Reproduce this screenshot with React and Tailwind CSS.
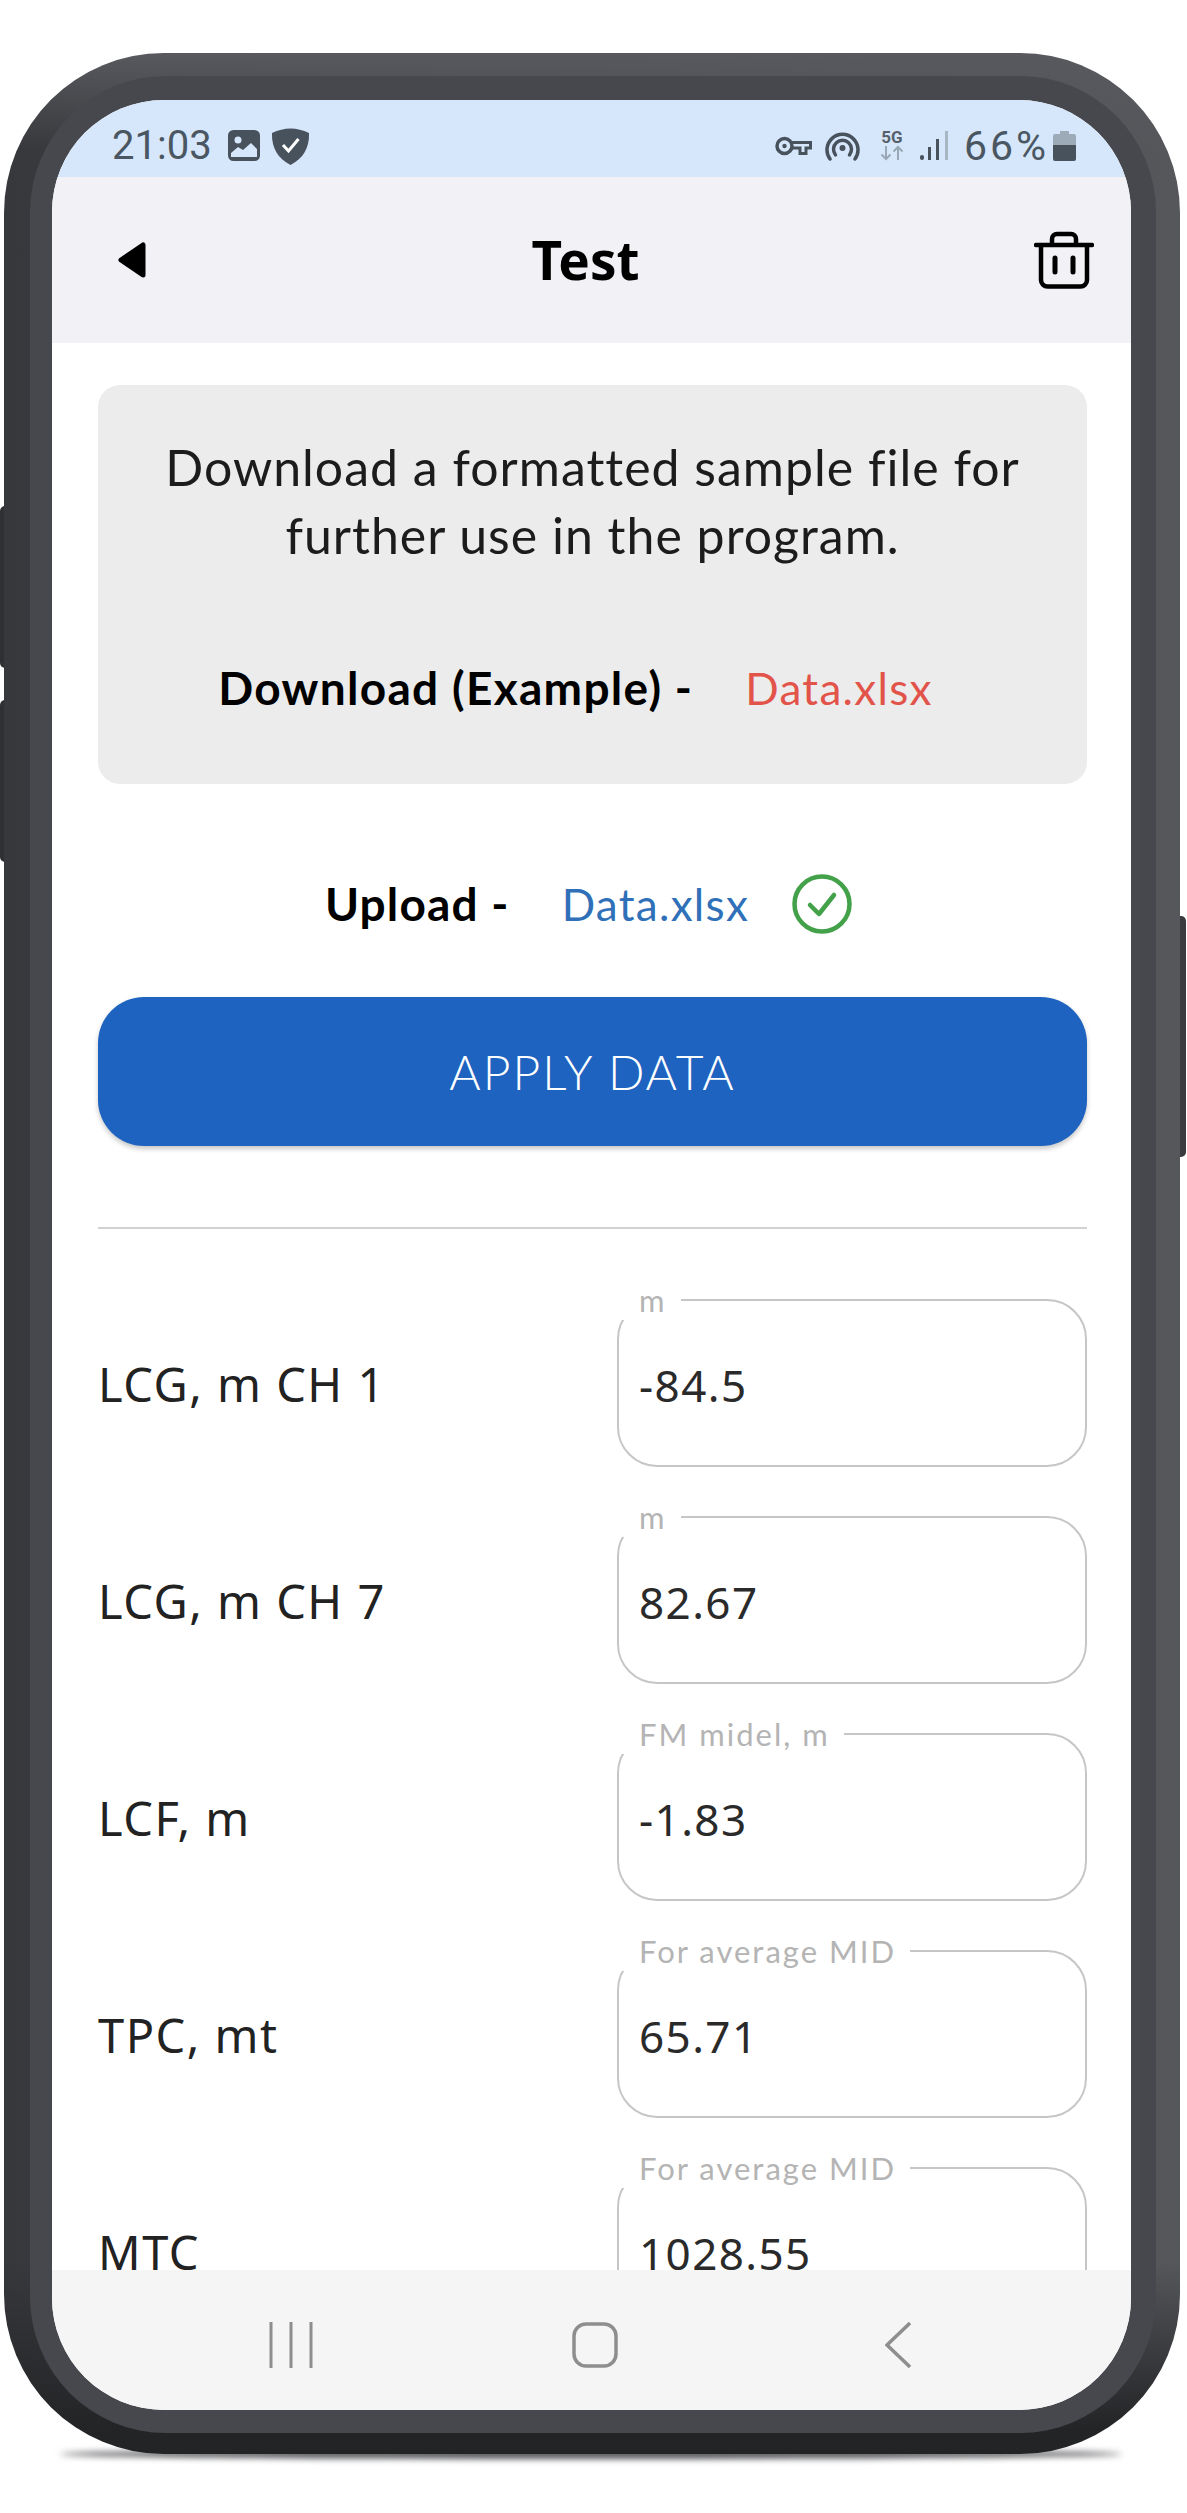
const rows = [
  { label: "LCG, m CH 1", hint: "m", value: "-84.5" },
  { label: "LCG, m CH 7", hint: "m", value: "82.67" },
  { label: "LCF, m", hint: "FM midel, m", value: "-1.83" },
  { label: "TPC, mt", hint: "For average MID", value: "65.71" },
  { label: "MTC", hint: "For average MID", value: "1028.55" },
];

function Field({ label, hint, value }) {
  return (
    <div className="flex items-center justify-between shrink-0 h-[187px]">
      <div className="text-[47px] leading-[56px] tracking-[1.5px] text-[#222222] font-['Noto_Sans',sans-serif] pt-[21px]">{label}</div>
      <fieldset className="w-[470px] h-[187px] shrink-0 border-2 border-[#c6c6c6] rounded-[40px] px-[20px] m-0">
        <legend className="h-[40px] pl-[20px] pr-[14px] ml-[-20px] text-[31px] leading-[40px] tracking-[2px] text-[#b4b4b4] font-['Lato',sans-serif]">{hint}</legend>
        <div className="pt-[38px] text-[44px] leading-[54px] tracking-[1.4px] text-[#2a2a2a] font-['Noto_Sans',sans-serif]">{value}</div>
      </fieldset>
    </div>
  );
}

function StatusBar() {
  const ink = "#47525d";
  return (
    <div className="h-[77px] shrink-0 bg-[#d6e6fb] flex items-center justify-between pl-[60px] pr-[55px] pt-[14px]">
      <div className="flex items-center">
        <span className="text-[40px] leading-[48px] text-[#4a5661] font-['Roboto',sans-serif] mr-[16px]">21:03</span>
        <svg width="32" height="31" viewBox="0 0 32 31" className="mr-[11px]">
          <rect x="1.5" y="1.5" width="29" height="28" rx="4" fill={ink} stroke={ink} strokeWidth="3" />
          <circle cx="10" cy="10" r="3.5" fill="#d6e6fb" />
          <path d="M3 25 L3 23 L10 17 L15 20 L23 13 L29 19 L29 27 L3 27 Z" fill="#d6e6fb" />
        </svg>
        <svg width="39" height="38" viewBox="0 0 39 38">
          <path d="M1 6 Q19.5 -3 38 6 C38.5 20 33 31 19.5 38 C6 31 0.5 20 1 6 Z" fill={ink} />
          <path d="M12 18 L17.5 24 L27.5 12" fill="none" stroke="#ffffff" strokeWidth="3" />
        </svg>
      </div>
      <div className="flex items-center">
        <svg width="37" height="20" viewBox="0 0 37 20" className="mr-[13px]">
          <circle cx="9.5" cy="10" r="7.5" fill="none" stroke={ink} strokeWidth="3.5" />
          <circle cx="9.5" cy="10" r="2.2" fill={ink} />
          <path d="M17 6.5 H35.5 V12 H31 V17.5 H25 V12 H17" fill="none" stroke={ink} strokeWidth="3" />
        </svg>
        <svg width="35" height="30" viewBox="0 0 35 30" className="mr-[20px]">
          <path d="M5 28 A15.5 15.5 0 1 1 30 28" fill="none" stroke={ink} strokeWidth="3.5" strokeLinecap="round" />
          <path d="M10.5 24 A9 9 0 1 1 24.5 24" fill="none" stroke={ink} strokeWidth="3.5" strokeLinecap="round" />
          <circle cx="17.5" cy="17" r="3" fill={ink} />
        </svg>
        <div className="flex flex-col items-center w-[24px] mr-[16px]">
          <span className="text-[17px] leading-[15px] font-bold text-[#56616b] font-['Roboto',sans-serif]">5G</span>
          <svg width="24" height="16" viewBox="0 0 24 16">
            <path d="M6 1 V14 M1.5 9.5 L6 14 L10.5 9.5 M18 15 V2 M13.5 6.5 L18 2 L22.5 6.5" fill="none" stroke="#9aa8b5" strokeWidth="2" />
          </svg>
        </div>
        <svg width="29" height="30" viewBox="0 0 29 30" className="mr-[15px]">
          <rect x="0" y="24" width="4" height="5" rx="2" fill={ink} />
          <rect x="8" y="16" width="3" height="13" fill={ink} />
          <rect x="16" y="8" width="3" height="21" fill={ink} />
          <rect x="25" y="0" width="3" height="29" fill="#a9b7c4" />
        </svg>
        <span className="text-[41px] leading-[48px] tracking-[3px] text-[#4a5661] font-['Roboto',sans-serif] mr-[4px]">66%</span>
        <svg width="23" height="30" viewBox="0 0 23 30">
          <path d="M7 0 H16 V3 H21 A2 2 0 0 1 23 5 V14 H0 V5 A2 2 0 0 1 2 3 H7 Z" fill="#9dabb9" />
          <path d="M0 14 H23 V28 A2 2 0 0 1 21 30 H2 A2 2 0 0 1 0 28 Z" fill={ink} />
        </svg>
      </div>
    </div>
  );
}

function Header() {
  return (
    <div className="h-[166px] shrink-0 bg-[#f1f1f6] grid grid-cols-[1fr_auto_1fr] items-center pl-[66px] pr-[37px]">
      <svg width="28" height="36" viewBox="0 0 28 36">
        <polygon points="25,3 25,33 3,18" fill="#000000" stroke="#000000" strokeWidth="5" strokeLinejoin="round" />
      </svg>
      <div className="text-[53px] leading-[60px] font-bold text-black font-['Noto_Sans',sans-serif] mr-[41px]">Test</div>
      <svg width="60" height="58" viewBox="0 0 60 58" className="justify-self-end">
        <path d="M2 14 H58" fill="none" stroke="#000000" strokeWidth="4.5" strokeLinecap="round" />
        <path d="M18 14 V8 A5 5 0 0 1 23 3 H37 A5 5 0 0 1 42 8 V14" fill="none" stroke="#000000" strokeWidth="4.5" />
        <path d="M7 14 V49 A6.5 6.5 0 0 0 13.5 55.5 H46.5 A6.5 6.5 0 0 0 53 49 V14" fill="none" stroke="#000000" strokeWidth="4.5" />
        <path d="M21 27 V41 M39 27 V41" fill="none" stroke="#000000" strokeWidth="5" strokeLinecap="round" />
      </svg>
    </div>
  );
}

function Content() {
  return (
    <div className="flex-1 min-h-0 overflow-hidden bg-white pl-[46px] pr-[44px] pt-[42px] flex flex-col font-['Lato',sans-serif]">
      <div className="h-[399px] shrink-0 rounded-[22px] bg-[#ececec] flex flex-col items-center pt-[48px]">
        <p className="text-[50px] leading-[68px] tracking-[1px] text-[#1c1c1c] text-center">
          Download a formatted sample file for
          <br />
          further use in the program.
        </p>
        <div className="flex items-center mt-[92px] pr-[34px]">
          <span className="text-[46px] leading-[54px] tracking-[1.3px] font-bold text-black mr-[52px]">Download (Example) -</span>
          <span className="text-[44px] leading-[54px] tracking-[1.3px] text-[#e2544a]">Data.xlsx</span>
        </div>
      </div>
      <div className="flex items-center justify-center h-[60px] mt-[90px] pr-[8px] shrink-0">
        <span className="text-[46px] leading-[54px] tracking-[1.2px] font-bold text-black mr-[52px]">Upload -</span>
        <span className="text-[44px] leading-[54px] tracking-[1.3px] text-[#2f70b8] mr-[43px]">Data.xlsx</span>
        <svg width="60" height="60" viewBox="0 0 60 60">
          <circle cx="30" cy="30" r="27.5" fill="none" stroke="#43a14a" strokeWidth="4.5" />
          <path d="M18 31 L27 40 L42 21" fill="none" stroke="#43a14a" strokeWidth="4.5" strokeLinecap="round" strokeLinejoin="round" />
        </svg>
      </div>
      <button className="h-[149px] shrink-0 mt-[63px] rounded-[46px] bg-[#1e63bf] shadow-[0_3px_5px_rgba(0,0,0,0.22)] text-white text-[48px] font-light tracking-[2px] flex items-center justify-center">
        APPLY DATA
      </button>
      <div className="h-[2px] shrink-0 bg-[#d2d2d2] mt-[81px]" />
      <div className="flex flex-col gap-[30px] mt-[51px]">
        {rows.map((r) => (
          <Field key={r.label} {...r} />
        ))}
      </div>
    </div>
  );
}

function NavBar() {
  const c = "#8e8e8e";
  return (
    <div className="h-[140px] shrink-0 bg-[#f5f5f6] relative flex items-start justify-between pl-[217px] pr-[220px] pt-[52px]">
      <svg width="44" height="46" viewBox="0 0 44 46">
        <path d="M2 0 V46 M22 0 V46 M42 0 V46" fill="none" stroke={c} strokeWidth="3" />
      </svg>
      <svg width="46" height="46" viewBox="0 0 46 46" className="mr-[8px]">
        <rect x="2" y="2" width="42" height="42" rx="12" fill="none" stroke={c} strokeWidth="3.5" />
      </svg>
      <svg width="26" height="46" viewBox="0 0 26 46">
        <path d="M25 1 L2 23 L25 45" fill="none" stroke={c} strokeWidth="3.5" />
      </svg>
    </div>
  );
}

export default function App() {
  return (
    <div className="relative w-[1187px] h-[2513px] bg-white overflow-hidden pt-[53px] pl-[4px]">
      <div className="absolute left-[60px] top-[2449px] w-[1062px] h-[10px] rounded-[50%] bg-[#55565a] blur-[3px]" />
      <div className="absolute left-0 top-[506px] w-[10px] h-[162px] rounded-l-[5px] bg-[#2f3033]" />
      <div className="absolute left-0 top-[700px] w-[10px] h-[162px] rounded-l-[5px] bg-[#2f3033]" />
      <div className="absolute left-[1176px] top-[916px] w-[10px] h-[241px] rounded-r-[5px] bg-[#3a3b3e]" />
      <div className="relative w-[1176px] h-[2401px] rounded-[160px] bg-[linear-gradient(to_bottom,#58595e_0,rgba(88,89,94,0)_4%,rgba(35,36,38,0)_92%,#232426_99%),linear-gradient(to_right,#37383b,#47484c_50%,#56575b)] pl-[26px] pr-[24px] pt-[23px] pb-[21px]">
        <div className="w-full h-full rounded-[136px] bg-[#47484d] pl-[22px] pr-[25px] pt-[24px] pb-[23px]">
          <div className="w-full h-full rounded-[112px] overflow-hidden flex flex-col bg-white">
            <StatusBar />
            <Header />
            <Content />
            <NavBar />
          </div>
        </div>
      </div>
    </div>
  );
}
